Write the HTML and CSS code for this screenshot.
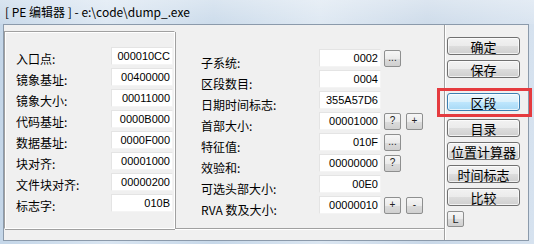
FILE: index.html
```html
<!DOCTYPE html>
<html lang="zh">
<head>
    <meta charset="UTF-8">
    <title>PE 编辑器</title>
    <link rel="stylesheet" href="styles.css">
</head>
<body>
    <div class="window">
        <div class="titlebar">[ PE 编辑器 ] - e:\code\dump_.exe</div>
        <div class="frame">
            <div class="client">
                <div class="group left">
                    <div class="row"><span class="lbl">入口点:</span><span class="field">000010CC</span></div>
                    <div class="row"><span class="lbl">镜象基址:</span><span class="field">00400000</span></div>
                    <div class="row"><span class="lbl">镜象大小:</span><span class="field">00011000</span></div>
                    <div class="row"><span class="lbl">代码基址:</span><span class="field">0000B000</span></div>
                    <div class="row"><span class="lbl">数据基址:</span><span class="field">0000F000</span></div>
                    <div class="row"><span class="lbl">块对齐:</span><span class="field">00001000</span></div>
                    <div class="row"><span class="lbl">文件块对齐:</span><span class="field">00000200</span></div>
                    <div class="row"><span class="lbl">标志字:</span><span class="field">010B</span></div>
                </div>
                <div class="group middle">
                    <div class="row"><span class="lbl">子系统:</span><span class="field">0002</span><button class="mini">...</button></div>
                    <div class="row"><span class="lbl">区段数目:</span><span class="field">0004</span></div>
                    <div class="row"><span class="lbl">日期时间标志:</span><span class="field">355A57D6</span></div>
                    <div class="row"><span class="lbl">首部大小:</span><span class="field">00001000</span><button class="mini">?</button><button class="mini">+</button></div>
                    <div class="row"><span class="lbl">特征值:</span><span class="field">010F</span><button class="mini">...</button></div>
                    <div class="row"><span class="lbl">效验和:</span><span class="field">00000000</span><button class="mini">?</button></div>
                    <div class="row"><span class="lbl">可选头部大小:</span><span class="field">00E0</span></div>
                    <div class="row"><span class="lbl">RVA 数及大小:</span><span class="field">00000010</span><button class="mini">+</button><button class="mini">-</button></div>
                </div>
                <div class="actions">
                    <button class="btn">确定</button>
                    <button class="btn">保存</button>
                    <button class="btn hot sep">区段</button>
                    <button class="btn">目录</button>
                    <button class="btn">位置计算器</button>
                    <button class="btn">时间标志</button>
                    <button class="btn">比较</button>
                    <button class="mini small">L</button>
                    <div class="mark"></div>
                </div>
            </div>
        </div>
    </div>
</body>
</html>
```

FILE: styles.css
```css
body {
    margin: 0;
    width: 534px;
    height: 244px;
    overflow: hidden;
    font-family: "Noto Sans CJK SC", "Liberation Sans", sans-serif;
    font-size: 12px;
    color: #000;
}
.window {
    height: 244px;
    background: linear-gradient(90deg, #c4d6e8 0%, #d9e5f1 20%, #c7d8e9 40%, #dbe6f1 60%, #c9d8e8 80%, #d6e2ef 100%);
}
.titlebar {
    height: 24px;
    line-height: 23px;
    padding-left: 5px;
    font-size: 12px;
    background: linear-gradient(180deg, rgba(255,255,255,0.35), rgba(255,255,255,0.1));
}
.frame {
    padding: 0 5px 3px 3px;
}
.client {
    position: relative;
    display: flex;
    height: 215px;
    background: #f0f0f0;
    border: 1px solid #8b9aab;
}
.group {
    display: flex;
    flex-direction: column;
    gap: 3px;
}
.left {
    margin-top: 6px;
    border: 1px solid #a0a0a0;
    border-right-color: #fff;
    border-bottom-color: #fff;
    box-shadow: inset 1px 1px 0 #fff, 1px 1px 0 #a0a0a0;
    padding: 15px 2px 0 11px;
    box-sizing: border-box;
    width: 171px;
    height: 198px;
}
.middle {
    width: 269px;
    height: 204px;
    padding: 24px 0 0 26px;
    box-sizing: border-box;
    border-bottom: 1px solid #a0a0a0;
    box-shadow: 0 1px 0 #fff;
}
.row {
    display: flex;
    align-items: center;
    height: 18px;
}
.lbl {
    flex: none;
    position: relative;
    top: 2px;
}
.left .lbl {
    width: 95px;
}
.middle .lbl {
    width: 118px;
    top: 4px;
}
.field {
    flex: none;
    width: 62px;
    height: 18px;
    box-sizing: border-box;
    background: #fff;
    border: 1px solid #e4e4e4;
    border-bottom-color: #f4f4f4;
    border-right-color: #f4f4f4;
    font-family: "Liberation Sans", sans-serif;
    font-size: 11px;
    line-height: 16px;
    text-align: right;
    padding-right: 2px;
}
.mini {
    flex: none;
    width: 17px;
    height: 17px;
    margin-left: 3px;
    padding: 0;
    border: 1px solid #8e8f8f;
    border-radius: 2px;
    background: linear-gradient(180deg, #f6f6f6 0%, #ebebeb 50%, #dcdcdc 51%, #d0d0d0 100%);
    font-family: "Liberation Sans", sans-serif;
    font-size: 10px;
    line-height: 14px;
    color: #222;
}
.mini + .mini {
    margin-left: 5px;
}
.actions {
    display: flex;
    flex-direction: column;
    align-items: flex-start;
    gap: 5px;
    padding: 12px 0 0 2px;
    width: 81px;
    border-left: 1px solid #a0a0a0;
    box-shadow: inset 1px 0 0 #fff;
}
.btn {
    width: 73px;
    height: 18px;
    padding: 0;
    border: 1px solid #707070;
    border-radius: 3px;
    background: linear-gradient(180deg, #f2f2f2 0%, #ebebeb 50%, #dddddd 51%, #cfcfcf 100%);
    box-shadow: inset 0 0 0 1px rgba(255,255,255,0.7);
    font-family: "Noto Sans CJK SC", sans-serif;
    font-size: 13px;
    line-height: 15px;
    color: #000;
}
.btn.sep {
    margin-top: 10px;
    margin-bottom: 3px;
}
.btn.hot {
    border-color: #3c7fb1;
    background: linear-gradient(180deg, #eaf6fd 0%, #d9f0fc 50%, #bee6fd 51%, #a7d9f5 100%);
}
.mini.small {
    margin-left: 0;
    height: 16px;
    font-size: 11px;
}
.mark {
    position: absolute;
    left: 433px;
    top: 63px;
    width: 95px;
    height: 29px;
    box-sizing: border-box;
    border: 3px solid #e53b3f;
}
```
